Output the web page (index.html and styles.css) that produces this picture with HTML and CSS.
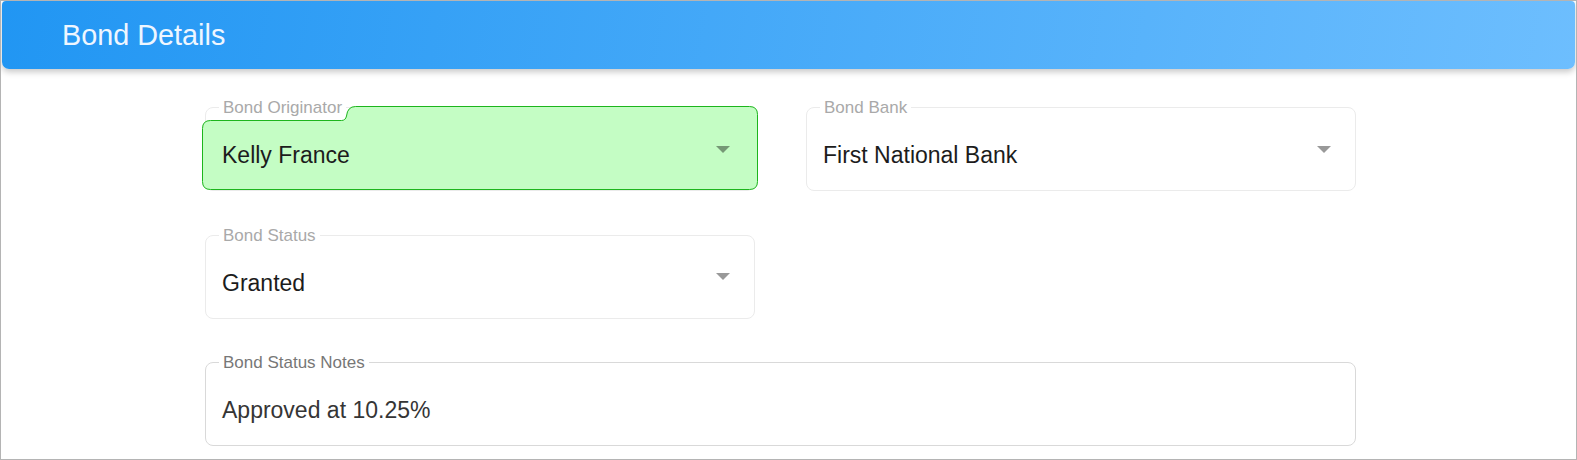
FILE: index.html
```html
<!DOCTYPE html>
<html lang="en">
<head>
  <meta charset="UTF-8">
  <title>Bond Details</title>
  <meta name="viewport" content="width=device-width, initial-scale=1">
  <link rel="stylesheet" href="styles.css">
</head>
<body>

<div class="page">
  <header class="panel-header">
    <h1>Bond Details</h1>
  </header>

  <form class="bond-form">
    <div class="field active">
      <!-- green highlight with the notch cut around the label -->
      <svg class="highlight" width="556" height="84" viewBox="0 0 556 84">
        <path d="M0.5 22.5 Q0.5 14.5 8.5 14.5 H139.5 Q143.5 14.5 144.5 10 Q145.5 0.5 153.5 0.5 H547.5 Q555.5 0.5 555.5 8.5 V75.5 Q555.5 83.5 547.5 83.5 H8.5 Q0.5 83.5 0.5 75.5 Z" fill="#c4fdc4" stroke="#1db51d" stroke-width="1"/>
      </svg>
      <fieldset>
        <legend>Bond Originator</legend>
        <div class="select">
          <span class="value">Kelly France</span>
          <span class="arrow"></span>
        </div>
      </fieldset>
    </div>

    <div class="field">
      <fieldset>
        <legend>Bond Bank</legend>
        <div class="select">
          <span class="value">First National Bank</span>
          <span class="arrow"></span>
        </div>
      </fieldset>
    </div>

    <div class="field">
      <fieldset>
        <legend>Bond Status</legend>
        <div class="select">
          <span class="value">Granted</span>
          <span class="arrow"></span>
        </div>
      </fieldset>
    </div>

    <div class="field notes">
      <fieldset>
        <legend>Bond Status Notes</legend>
        <div class="select">
          <span class="value">Approved at 10.25%</span>
        </div>
      </fieldset>
    </div>
  </form>
</div>

</body>
</html>
```

FILE: styles.css
```css
* {
  box-sizing: border-box;
  margin: 0;
  padding: 0;
}

body {
  font-family: 'Liberation Sans', Arial, sans-serif;
  background: white;
}

.page {
  height: 100vh;
  border: 1px solid #b4b4b4;
  overflow: hidden;
}

.panel-header {
  height: 68px;
  margin: 0 1px;
  padding-left: 60px;
  display: flex;
  align-items: center;
  background: linear-gradient(100deg, #2196f3, #6dbefe);
  border-radius: 4px 4px 7px 7px;
  box-shadow: 0 3px 6px rgba(0, 0, 0, 0.22);
}

.panel-header h1 {
  font-size: 28.8px;
  font-weight: normal;
  color: #eef6ff;
}

.bond-form {
  width: 1151px;
  margin: 29px 0 0 204px;
  display: grid;
  grid-template-columns: 550px 550px;
  column-gap: 51px;
  row-gap: 34.5px;
}

.field {
  position: relative;
}

.field.notes {
  grid-column: 1 / 3;
}

.highlight {
  position: absolute;
  top: 7.5px;
  left: -3px;
}

fieldset {
  border: 1px solid #ebebeb;
  border-radius: 8px;
  padding: 10px 16px 7px;
}

legend {
  font-size: 17px;
  line-height: 19px;
  color: #a9a9a9;
  padding: 0 4px;
  margin-left: -3px;
}

.select {
  position: relative;
  display: flex;
  justify-content: space-between;
  align-items: flex-start;
  height: 56px;
}

.value {
  font-size: 23px;
  line-height: 56px;
  color: #1c1c1c;
}

.arrow {
  width: 0;
  height: 0;
  margin-top: 18.5px;
  margin-right: 8px;
  border-left: 7.5px solid transparent;
  border-right: 7.5px solid transparent;
  border-top: 7px solid rgba(0, 0, 0, 0.4);
}

.notes fieldset {
  border-color: #d9d9d9;
}

.notes legend {
  color: #777;
}

.notes .value {
  color: #353535;
}
```
